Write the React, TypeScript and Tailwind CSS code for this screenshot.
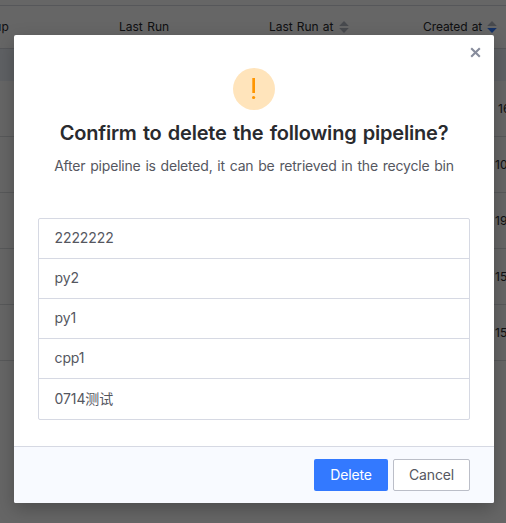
import React from "react";

const pipelines = ["2222222", "py2", "py1", "cpp1", "0714测试"];
const createdTimes = ["16", "10", "19", "15", "15"];
const timeOffsets = ["pl-[498px]", "pl-[495px]", "pl-[495px]", "pl-[495px]", "pl-[495px]"];

function SortIcon({ active = false }: { active?: boolean }) {
  return (
    <svg width="10" height="12" viewBox="0 0 10 12" className="shrink-0">
      <path d="M5 0L9.8 5H0.2Z" fill="#b4b8c4" />
      <path d="M5 12L0.2 7H9.8Z" fill={active ? "#337aff" : "#b4b8c4"} />
    </svg>
  );
}

function TableBackdrop() {
  return (
    <div className="h-full w-full bg-white pt-[5px] text-[12px] text-[#292a2e]">
      <div className="flex h-11 items-center border-y border-[#d6dae0] leading-4 whitespace-nowrap">
        <div className="flex w-[119px]">
          <span className="-ml-[27px] w-9 text-right tracking-[0.2px]">Group</span>
        </div>
        <div className="w-[150px] [word-spacing:1px]">Last Run</div>
        <div className="flex w-[154px] items-center gap-[5px]">
          <span className="w-[65px] [word-spacing:0.6px]">Last Run at</span>
          <SortIcon />
        </div>
        <div className="flex items-center gap-[5px]">
          <span className="w-[59px] tracking-[-0.1px] [word-spacing:1px]">Created at</span>
          <SortIcon active />
        </div>
      </div>
      <div className="h-8 bg-[#eef3fb]" />
      {createdTimes.map((time, i) => (
        <div key={i} className={`flex h-14 items-center border-b border-[#dcdee2] ${timeOffsets[i]}`}>
          {time}
        </div>
      ))}
    </div>
  );
}

function DeleteDialog() {
  return (
    <div className="relative flex h-[468px] w-[480px] flex-col rounded-[2px] bg-white text-sm text-[#55575f] shadow-[0_6px_18px_rgba(0,0,0,0.25)]">
      <button aria-label="Close" className="absolute top-[12px] right-[13px]">
        <svg width="11" height="11" viewBox="0 0 11 11" className="block">
          <path d="M1.2 1.2L9.8 9.8M9.8 1.2L1.2 9.8" stroke="#878c9c" strokeWidth="2.1" />
        </svg>
      </button>
      <div className="flex flex-1 flex-col items-center px-6 pt-[33px]">
        <svg width="42" height="42" viewBox="0 0 42 42">
          <circle cx="21" cy="21" r="21" fill="#ffe4bb" />
          <path d="M19.3 10H22V25H19.3Z" fill="#ff9500" />
          <circle cx="20.6" cy="29.5" r="1.6" fill="#ff9500" />
        </svg>
        <h1 className="mt-[10px] text-[20px] leading-[26px] font-semibold tracking-[-0.2px] whitespace-nowrap text-[#292a2e] [word-spacing:1.4px]">
          Confirm to delete the following pipeline?
        </h1>
        <p className="mt-[10px] leading-5 tracking-[-0.2px] whitespace-nowrap [word-spacing:1.1px]">
          After pipeline is deleted, it can be retrieved in the recycle bin
        </p>
        <ul className="mt-[42px] w-full rounded-[2px] border border-[#d6d9e3]">
          {pipelines.map((name) => (
            <li
              key={name}
              className="flex h-10 items-center border-b border-[#d6d9e3] px-[15.5px] pb-px tracking-[-0.1px] last:border-b-0"
            >
              {name}
            </li>
          ))}
        </ul>
      </div>
      <div className="flex h-[57px] items-start justify-end gap-[5px] rounded-b-[2px] border-t border-[#d6d9e3] bg-[#f8faff] px-6 pt-3 tracking-[-0.15px]">
        <button className="h-8 w-[74px] rounded-[2px] bg-[#3379ff] text-white">Delete</button>
        <button className="h-8 w-[77px] rounded-[2px] border border-[#bbbec8] bg-white">Cancel</button>
      </div>
    </div>
  );
}

export default function App() {
  return (
    <div className="relative h-[523px] w-[506px] overflow-hidden font-['Inter','Noto_Sans_CJK_SC',sans-serif]">
      <TableBackdrop />
      <div className="absolute inset-0 flex items-start justify-start bg-black/60 pt-[35px] pl-[14px]">
        <DeleteDialog />
      </div>
    </div>
  );
}
